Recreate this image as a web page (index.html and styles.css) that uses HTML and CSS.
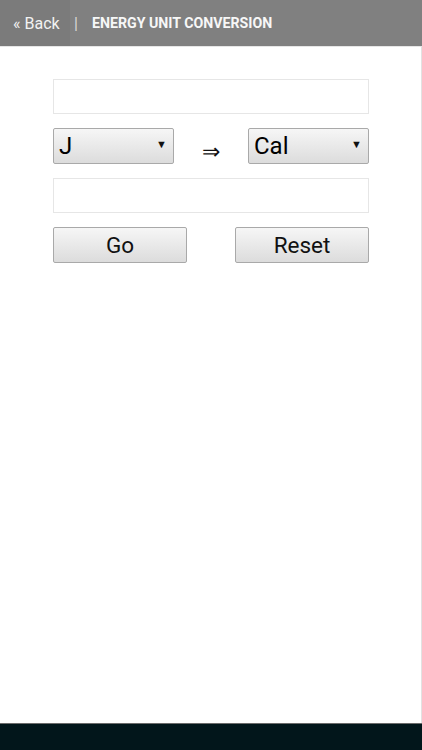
FILE: index.html
```html
<!DOCTYPE html>
<html lang="en">
<head>
    <meta charset="UTF-8">
    <meta name="viewport" content="width=device-width, initial-scale=1.0">
    <title>Energy Unit Conversion</title>
    <link rel="stylesheet" href="styles.css">
</head>
<body>
    <div class="pagina">
        <!-- Barra de topo -->
        <header class="topo">
            <a class="voltar" href="#">« Back</a>
            <span class="separador">|</span>
            <h1 class="titulo">Energy Unit Conversion</h1>
        </header>

        <!-- Conversor -->
        <main class="conteudo">
            <form class="conversor" onsubmit="event.preventDefault()">
                <input type="text" class="campo" id="valorOrigem">
                <div class="linha-unidades">
                    <div class="seletor">
                        <select id="unidadeOrigem">
                            <option>J</option>
                            <option>Cal</option>
                            <option>kWh</option>
                        </select>
                    </div>
                    <span class="seta">⇒</span>
                    <div class="seletor">
                        <select id="unidadeDestino">
                            <option>Cal</option>
                            <option>J</option>
                            <option>kWh</option>
                        </select>
                    </div>
                </div>
                <input type="text" class="campo" id="valorDestino">
                <div class="linha-botoes">
                    <button type="submit" class="botao">Go</button>
                    <button type="reset" class="botao">Reset</button>
                </div>
            </form>
        </main>

        <footer class="rodape"></footer>
    </div>
</body>
</html>
```

FILE: styles.css
```css
/* Estilos gerais */
body {
    margin: 0;
    padding: 0;
    font-family: Roboto, "Liberation Sans", sans-serif;
    background-color: #fff;
}
.pagina {
    display: flex;
    flex-direction: column;
    height: 100vh;
}
.topo {
    display: flex;
    align-items: center;
    height: 46px;
    background-color: #808080;
    border-bottom: 1px solid #e6e6e6;
    flex-shrink: 0;
}
.voltar {
    display: flex;
    align-items: center;
    height: 100%;
    width: 70px;
    padding-left: 13px;
    box-sizing: border-box;
    background-color: #7b7b7b;
    color: #f2f2f2;
    font-size: 16px;
    text-decoration: none;
}
.separador {
    margin-left: 4px;
    color: #d8d8d8;
    font-size: 16px;
}
.titulo {
    margin: 0 0 0 14px;
    font-size: 14.2px;
    font-weight: bold;
    text-transform: uppercase;
    color: #f7f7f7;
}
.conteudo {
    flex: 1;
    box-shadow: inset -1px 0 0 #e2e2e2;
}
.conversor {
    width: 316px;
    margin: 32px auto 0;
    display: flex;
    flex-direction: column;
    gap: 14px;
}
.campo {
    height: 35px;
    margin: 0;
    padding: 0 6px;
    box-sizing: border-box;
    border: 1px solid #e6e6e6;
    background-color: #fff;
    font-size: 20px;
    font-family: inherit;
}
.linha-unidades,
.linha-botoes {
    display: flex;
    justify-content: space-between;
    align-items: center;
}
.seletor {
    position: relative;
    width: 121px;
}
.seletor::after {
    content: "▼";
    position: absolute;
    right: 7px;
    top: 10px;
    font-size: 11px;
    color: #111;
    pointer-events: none;
}
.seletor select {
    width: 100%;
    height: 36px;
    padding: 0 0 0 5px;
    -webkit-appearance: none;
    appearance: none;
    border: 1px solid #a9a9a9;
    border-radius: 2px;
    background: linear-gradient(#f6f6f6, #dcdcdc);
    font-family: inherit;
    font-size: 24px;
    color: #000;
}
.seta {
    font-size: 22px;
    margin-top: 10px;
    color: #111;
}
.botao {
    width: 134px;
    height: 36px;
    margin: 0;
    padding: 0;
    border: 1px solid #a9a9a9;
    border-radius: 2px;
    background: linear-gradient(#f6f6f6, #dcdcdc);
    font-family: inherit;
    font-size: 22.5px;
    color: #111;
}
.rodape {
    height: 26px;
    flex-shrink: 0;
    background-color: #02161b;
    border-top: 1px solid #6b6b6b;
}
```
